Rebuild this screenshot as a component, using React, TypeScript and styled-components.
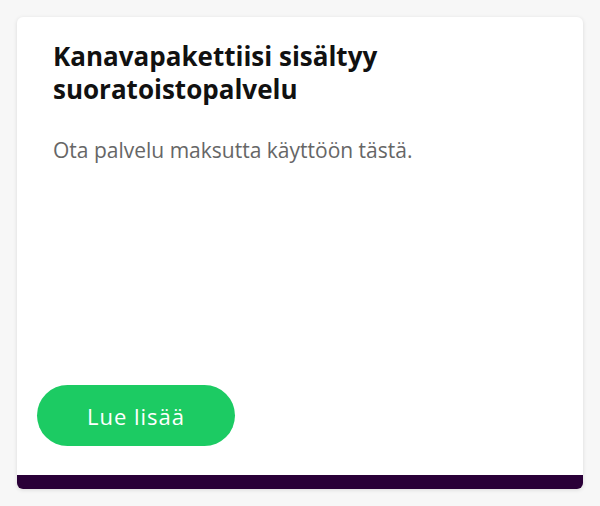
import styled, { createGlobalStyle } from "styled-components";

const GlobalStyle = createGlobalStyle`
  html, body {
    margin: 0;
    padding: 0;
    background: #f7f7f7;
  }
  body {
    font-family: "Open Sans", Lato, sans-serif;
  }
`;

export default function App() {
  return (
    <Page>
      <GlobalStyle />
      <Card>
        <Body>
          <Title>Kanavapakettiisi sisältyy suoratoistopalvelu</Title>
          <Text>Ota palvelu maksutta käyttöön tästä.</Text>
        </Body>
        <Footer>
          <Button>Lue lisää</Button>
        </Footer>
        <Stripe />
      </Card>
    </Page>
  );
}

const Page = styled.div`
  padding: 17px 17px 0;
  height: 506px;
  box-sizing: border-box;
`;

const Card = styled.div`
  height: 472px;
  background: #fff;
  border-radius: 6px;
  overflow: hidden;
  display: flex;
  flex-direction: column;
  box-shadow: 0 1px 4px rgba(0, 0, 0, 0.12);
`;

const Body = styled.div`
  flex: 1;
  padding: 23px 36px 0;
`;

const Title = styled.h2`
  margin: 0;
  max-width: 360px;
  font-size: 26px;
  line-height: 33px;
  font-weight: 700;
  color: #111;
`;

const Text = styled.p`
  margin: 31px 0 0;
  font-size: 21px;
  line-height: 26px;
  color: #666;
`;

const Footer = styled.div`
  padding: 0 20px 29px;
`;

const Button = styled.button`
  width: 198px;
  height: 61px;
  border: none;
  border-radius: 31px;
  background: #1ccb63;
  color: #fff;
  font-family: "Open Sans", sans-serif;
  font-size: 22px;
  font-weight: 500;
  letter-spacing: 1px;
`;

const Stripe = styled.div`
  height: 14px;
  background: #2a0038;
`;
